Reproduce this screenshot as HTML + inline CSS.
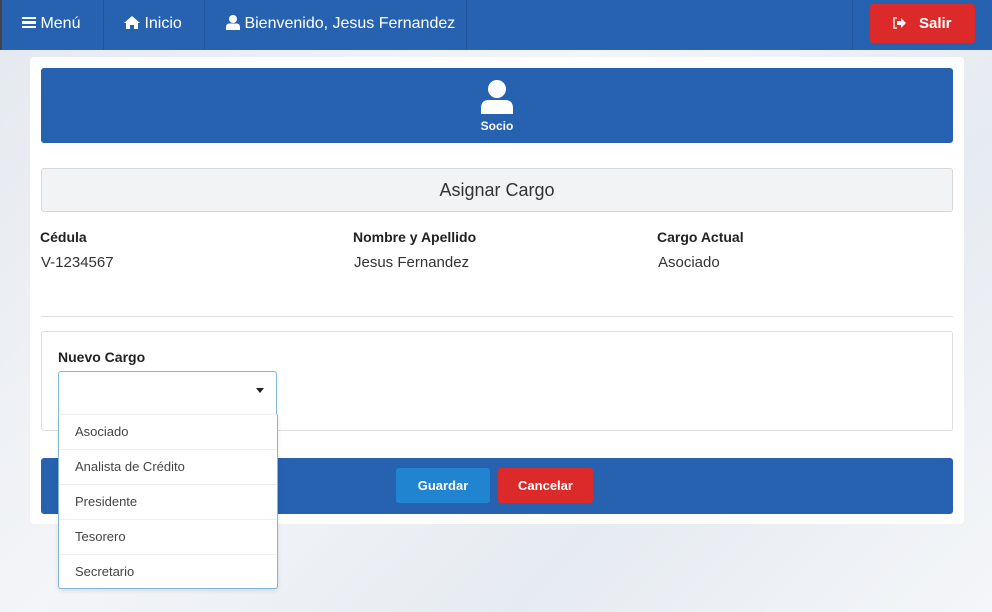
<!DOCTYPE html>
<html><head><meta charset="utf-8"><style>
*{box-sizing:border-box;margin:0;padding:0}
body{width:992px;height:612px;overflow:hidden;font-family:"Liberation Sans",sans-serif;background:linear-gradient(135deg,#e4e9ef 0%,#f3f5f8 40%,#e6ebf1 70%,#f4f6f9 100%);position:relative;color:#222}
.nav{position:absolute;left:0;top:0;width:992px;height:50px;background:#2762b0;border-left:2px solid #444;color:#fff;font-size:16px}
.nav .it{position:absolute;top:0;height:50px;line-height:47px;border-right:1px solid #1f539a}
.salir{position:absolute;left:868px;top:4px;width:105px;height:39px;background:#dc2a2a;border-radius:3px;color:#fff;font-weight:bold;font-size:15px;line-height:39px}
.card{position:absolute;left:30px;top:57px;width:934px;height:467px;background:#fff;border-radius:4px}
.abs{position:absolute}
.lbl{font-weight:bold;font-size:14px;color:#222}
.val{font-size:15px;color:#333}
.opt{height:35px;line-height:33px;padding-left:16px;font-size:13px;color:#444;border-bottom:1px solid #eee}
</style></head><body>
<div class="nav">
 <div class="it" style="left:0;width:102px;padding-left:20px"><span style="display:inline-block;width:14px;vertical-align:middle;margin-top:-3px"><i style="display:block;height:2.5px;background:#fff;margin:2px 0"></i><i style="display:block;height:2.5px;background:#fff;margin:2px 0"></i><i style="display:block;height:2.5px;background:#fff;margin:2px 0"></i></span> Menú</div>
 <div class="it" style="left:102px;width:101px;padding-left:20px"><svg width="16" height="13" viewBox="0 0 16 13" style="vertical-align:-1px"><path d="M8 0L0 7h2v6h4V9h4v4h4V7h2z" fill="#fff"/></svg> Inicio</div>
 <div class="it" style="left:203px;width:262px;padding-left:21px"><svg width="14" height="15" viewBox="0 0 14 15" style="vertical-align:-2px"><circle cx="7" cy="4" r="4" fill="#fff"/><path d="M0 15v-3q0-3 3-3.5h8q3 .5 3 3.5v3z" fill="#fff"/></svg> Bienvenido, Jesus Fernandez</div>
 <div class="it" style="left:465px;width:386px"></div>
 <div class="salir"><span style="padding-left:22px"><svg width="15" height="12" viewBox="0 0 15 12" style="vertical-align:-1px"><path d="M5 1H2v10h3" stroke="#f5b5b5" stroke-width="2" fill="none"/><path d="M5 4h4V1l5 5-5 5V8H5z" fill="#fff"/></svg></span><span style="padding-left:12px">Salir</span></div>
</div>
<div class="card">
 <div class="abs" style="left:11px;top:11px;width:912px;height:75px;background:#2762b0;border-radius:3px;color:#fff;text-align:center">
  <svg width="32" height="34" viewBox="0 0 32 34" style="position:absolute;left:440px;top:12px"><circle cx="16" cy="9" r="9" fill="#fff"/><path d="M0 34v-6q0-8 8-8h16q8 0 8 8v6z" fill="#fff"/></svg>
  <div style="position:absolute;left:0;right:0;top:51px;font-size:12px;font-weight:bold">Socio</div>
 </div>
 <div class="abs" style="left:11px;top:111px;width:912px;height:44px;background:#f2f3f5;border:1px solid #d6d8db;border-radius:3px;text-align:center;line-height:42px;font-size:18px;color:#333">Asignar Cargo</div>
 <div class="abs lbl" style="left:10px;top:172px">Cédula</div>
 <div class="abs val" style="left:11px;top:197px">V-1234567</div>
 <div class="abs lbl" style="left:323px;top:172px">Nombre y Apellido</div>
 <div class="abs val" style="left:324px;top:197px">Jesus Fernandez</div>
 <div class="abs lbl" style="left:627px;top:172px">Cargo Actual</div>
 <div class="abs val" style="left:628px;top:197px">Asociado</div>
 <div class="abs" style="left:11px;top:259px;width:912px;height:1px;background:#ddd"></div>
 <div class="abs" style="left:11px;top:274px;width:912px;height:100px;border:1px solid #ddd;border-radius:3px"></div>
 <div class="abs lbl" style="left:28px;top:292px">Nuevo Cargo</div>
 <div class="abs" style="left:11px;top:401px;width:912px;height:56px;background:#2762b0;border-radius:3px"></div>
 <div class="abs" style="left:366px;top:411px;width:94px;height:35px;background:#2184d0;border-radius:3px;color:#fff;font-weight:bold;font-size:13px;text-align:center;line-height:35px">Guardar</div>
 <div class="abs" style="left:468px;top:411px;width:95px;height:35px;background:#dc2a2a;border-radius:3px;color:#fff;font-weight:bold;font-size:13px;text-align:center;line-height:35px">Cancelar</div>
</div>
<div class="abs" style="left:58px;top:371px;width:219px;height:44px;background:#fff;border:1px solid #7fb8d8;border-bottom:none;border-radius:3px 3px 0 0">
 <div class="abs" style="left:197px;top:16px;width:0;height:0;border-left:4.5px solid transparent;border-right:4.5px solid transparent;border-top:5px solid #222"></div>
</div>
<div class="abs" style="left:58px;top:414px;width:220px;height:175px;background:#fff;border:1px solid #7fb8d8;border-top:1px solid #eee;border-radius:0 0 3px 3px;box-shadow:0 2px 4px rgba(0,0,0,.1)">
 <div class="opt">Asociado</div><div class="opt">Analista de Crédito</div><div class="opt">Presidente</div><div class="opt">Tesorero</div><div class="opt" style="border:none">Secretario</div>
</div>
</body></html>
